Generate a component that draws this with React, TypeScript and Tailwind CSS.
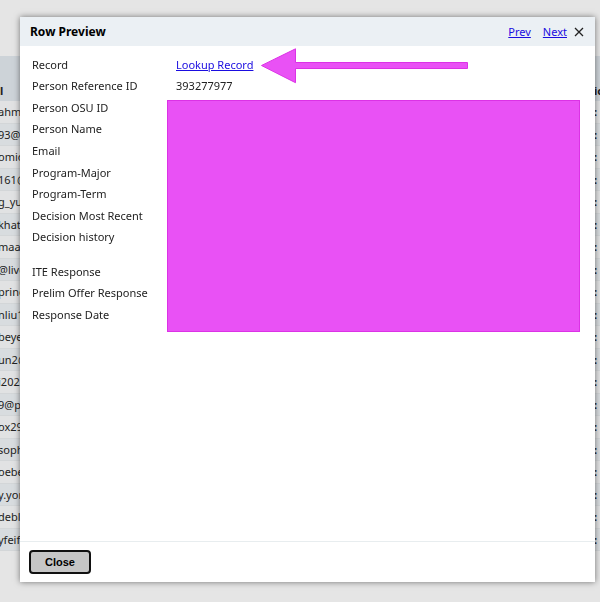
import React from 'react';

interface Field {
  label: string;
  value?: string;
  href?: string;
}

const FIELDS: Field[] = [
  { label: 'Record', value: 'Lookup Record', href: '#record' },
  { label: 'Person Reference ID', value: '393277977' },
  { label: 'Person OSU ID' },
  { label: 'Person Name' },
  { label: 'Email' },
  { label: 'Program-Major' },
  { label: 'Program-Term' },
  { label: 'Decision Most Recent' },
  { label: 'Decision history' },
];

const RESPONSE_FIELDS: Field[] = [
  { label: 'ITE Response' },
  { label: 'Prelim Offer Response' },
  { label: 'Response Date' },
];

const EMAILS = [
  'ahm', '93@', 'omio', '161@', 'g_yu', 'khatt', 'maa', '@live', 'princ', 'nliu1',
  'beye', 'un2@', 'i202', '9@p', 'ox29', 'soph', 'oebe', 'y.yor', 'debl', 'yfeif',
];

const FieldList: React.FC<{ fields: Field[]; className: string }> = ({ fields, className }) => (
  <dl className={`grid auto-rows-fr ${className}`}>
    {fields.map((field) => (
      <div key={field.label} className="flex items-center">
        <dt className="w-36 shrink-0 whitespace-nowrap">{field.label}</dt>
        <dd>
          {field.href ? (
            <a href={field.href} className="text-[#1a0ce0] underline">{field.value}</a>
          ) : (
            field.value
          )}
        </dd>
      </div>
    ))}
  </dl>
);

const ResultsTable: React.FC = () => (
  <div className="-ml-0.5 h-[559px] overflow-hidden pt-14">
    <table className="w-full table-fixed border-collapse">
      <thead>
        <tr className="h-[45px] bg-[#cdd3d8] text-left align-bottom">
          <th className="p-0 pb-0.5 pl-0.5">l</th>
          <th className="w-1.5 p-0 pb-0.5">ic</th>
        </tr>
      </thead>
      <tbody>
        {EMAILS.map((email) => (
          <tr
            key={email}
            className="h-[23px] bg-[#e1e2e3] shadow-[inset_0_-1px_#d3d6d8] even:h-[22px] even:bg-[#d8dcdf]"
          >
            <td className="p-0 pb-px">{email}</td>
            <td className="p-0 pb-px font-bold">:</td>
          </tr>
        ))}
        <tr className="h-[23px]">
          <td className="p-0">s.hoe</td>
        </tr>
      </tbody>
    </table>
  </div>
);

const Arrow: React.FC = () => (
  <svg
    className="absolute top-0 left-60 h-10 w-[210px]"
    viewBox="0 0 210 40"
    fill="#e951f5"
    stroke="#dc32e6"
    aria-hidden="true"
  >
    <path d="M1.5 19.5 L35.5 2.8 V16.5 H207.5 V22.5 H35.5 V36.7 Z" />
  </svg>
);

const App: React.FC = () => {
  return (
    <div className="relative min-h-screen overflow-hidden bg-[#e5e5e5] font-['Noto_Sans','DejaVu_Sans',sans-serif] text-[11px] leading-4 text-[#222]">
      <ResultsTable />

      <div className="fixed inset-0 flex pt-[17px] pr-[5px] pb-5 pl-5">
        <div
          role="dialog"
          aria-labelledby="preview-title"
          className="flex flex-1 flex-col bg-white shadow-[0_0_6px_rgba(0,0,0,0.5)]"
        >
          {/* Header */}
          <header className="flex h-[29px] items-center bg-[#ebf0f4] px-2.5">
            <h2 id="preview-title" className="flex-1 text-[12px] font-bold text-black">Row Preview</h2>
            <nav className="flex items-center">
              <a href="#prev" className="mr-3 text-[#1a0ce0] underline">Prev</a>
              <a href="#next" className="mr-1.5 text-[#1a0ce0] underline">Next</a>
              <button type="button" aria-label="Close preview">
                <svg className="h-3 w-3" viewBox="0 0 12 12" fill="none" stroke="#222" strokeWidth="1.3">
                  <path d="M2 2 L10 10 M10 2 L2 10" />
                </svg>
              </button>
            </nav>
          </header>

          {/* Fields */}
          <main className="relative flex-1 pt-2 pl-3">
            <FieldList fields={FIELDS} className="h-[194px]" />
            <FieldList fields={RESPONSE_FIELDS} className="mt-[13px] h-[65px]" />
            <Arrow />
            <div className="absolute top-[54px] right-[15px] left-[147px] h-[232px] border border-[#dc32e6] bg-[#e951f5]" />
          </main>

          {/* Footer */}
          <footer className="border-t border-[#e8edef] px-[9px] py-2">
            <button
              type="button"
              className="block h-6 rounded border-2 border-[#111] bg-[#c6c6c6] px-3.5 font-['Liberation_Sans',sans-serif] text-[11px] leading-4 font-bold text-black"
            >
              Close
            </button>
          </footer>
        </div>
      </div>
    </div>
  );
};

export default App;
